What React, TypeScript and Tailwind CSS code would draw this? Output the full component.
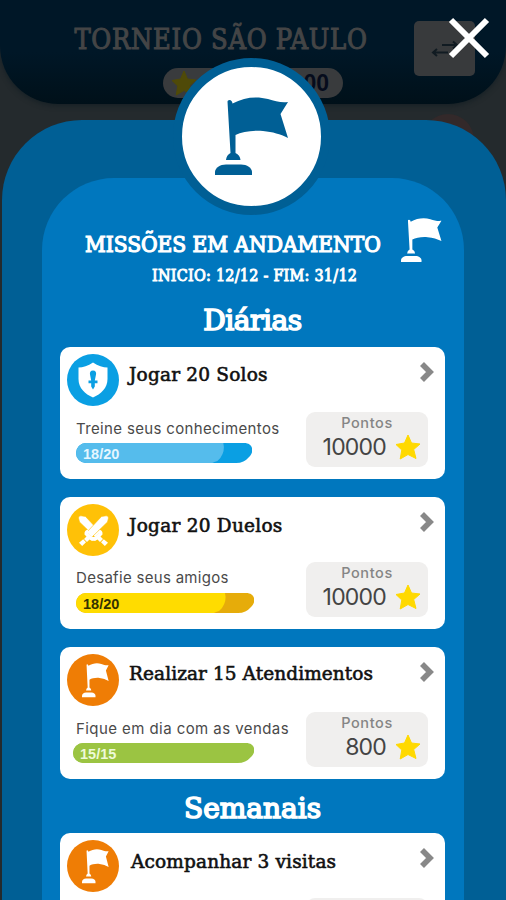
import { ChevronRight } from 'lucide-react'
import clsx from 'clsx'

type IconName = 'shield' | 'swords' | 'flag'

interface Mission {
  title: string
  titleClass: string
  icon: IconName
  circle: string
  details?: {
    description: string
    descriptionClass: string
    progress: string
    progressClass: string
    track: string
    fill: string
    points: string
  }
}

const slab = "font-['DejaVu_Serif',serif]"
const slabCondensed = "font-['DejaVu_Serif_Condensed','DejaVu_Serif',serif]"

const daily: Mission[] = [
  {
    title: 'Jogar 20 Solos',
    titleClass: 'ml-[10px] pt-[8px] tracking-[0.2px]',
    icon: 'shield',
    circle: 'bg-[#0a9fe3]',
    details: {
      description: 'Treine seus conhecimentos',
      descriptionClass: 'pt-[13px] tracking-[0.35px]',
      progress: '18/20',
      progressClass: 'ml-4 w-[176px] text-[#e4f6ff]',
      track: '#0a9fe3',
      fill: '#55bcec',
      points: '10000',
    },
  },
  {
    title: 'Jogar 20 Duelos',
    titleClass: 'ml-[10px] pt-[9px] tracking-[0.25px]',
    icon: 'swords',
    circle: 'bg-[#ffc107]',
    details: {
      description: 'Desafie seus amigos',
      descriptionClass: 'pt-[12px] tracking-[0.3px]',
      progress: '18/20',
      progressClass: 'ml-4 w-[178px] text-[#333300]',
      track: '#e6ac0a',
      fill: '#ffdc00',
      points: '10000',
    },
  },
  {
    title: 'Realizar 15 Atendimentos',
    titleClass: 'ml-[10px] pt-[7px] tracking-[0.08px]',
    icon: 'flag',
    circle: 'bg-[#ef7d05]',
    details: {
      description: 'Fique em dia com as vendas',
      descriptionClass: 'pt-[13px] tracking-[0.43px]',
      progress: '15/15',
      progressClass: 'ml-[13px] w-[181px] text-[#eefad8]',
      track: '#9bc442',
      fill: '#9bc442',
      points: '800',
    },
  },
]

const weekly: Mission[] = [
  {
    title: 'Acompanhar 3 visitas',
    titleClass: 'ml-[12px] pt-[9px] tracking-[0.15px]',
    icon: 'flag',
    circle: 'bg-[#ef7d05]',
  },
]

function Flag({ className }: { className?: string }) {
  return (
    <svg viewBox="0 0 74 80" className={className} fill="currentColor" preserveAspectRatio="none">
      <path d="M12.5 4.500Q12.500 3 14.500 3Q17 3 17.500 6.500C29 0 42 -1 53 2C60 4 66 6 73 5L65.500 17L73 41C65 37 58 35 48 34C37 33 27 35 20.500 38L20.500 56Q25 58 25.500 63L11 63Q11.500 58 15.500 56Z" />
      <path d="M0 78V75C0 71 5 67.500 11 67.500L26 67.500C32 67.500 37 71 37 75V78Z" />
    </svg>
  )
}

function Shield() {
  return (
    <svg viewBox="0 0 30 36" className="h-9 w-[30px]">
      <path d="M15 .5C20 4 25 5.300 29.500 5.500V17C29.500 26 23 32 15 35.500C7 32 .5 26 .5 17V5.500C5 5.300 10 4 15 .5Z" fill="white" />
      <path
        d="M15 8.500C17.500 8.500 18.500 10.500 18 12.500L16.800 18.500H19.500V21.200H16.800V24.500L15 27.500L13.200 24.500V21.200H10.500V18.500H13.200L12 12.500C11.500 10.500 12.500 8.500 15 8.500Z"
        fill="#0a9fe3"
      />
    </svg>
  )
}

function Swords() {
  // blade, guard and grip of one sword; the other is its mirror image
  const sword = (
    <>
      <path d="M.5 3Q.5 .5 3 .8L7.500 1.500L22 17L17 22L1.500 7Z" fill="white" stroke="#ffc107" strokeWidth=".6" />
      <path d="M12.500 20.500Q14 23 17 21.500L20.500 18Q21.500 16 20.500 14.500Q25 15 24.500 19.500L22.500 21.500L25 24L22 27L19.500 24.500L17 26Q13 25.500 12.500 20.500Z" fill="white" />
      <path d="M25.800 24.300L30 27.800L26.800 31L23 27.200Z" fill="white" />
    </>
  )
  return (
    <svg viewBox="0 0 31 31" className="h-[31px] w-[31px]">
      {sword}
      <g transform="translate(31 0) scale(-1 1)">{sword}</g>
    </svg>
  )
}

function Star({ className, color = '#ffd900' }: { className?: string; color?: string }) {
  return (
    <svg viewBox="0 0 26 26" className={className}>
      <path
        d="M13 1L16.500 9L25 10L18.700 15.500L21 24.500L13 20.500L5.200 25L6.800 16L1 10.500L9.500 9Z"
        fill={color}
        stroke={color}
        strokeWidth="1"
        strokeLinejoin="round"
      />
    </svg>
  )
}

function MissionIcon({ name }: { name: IconName }) {
  if (name === 'shield') return <Shield />
  if (name === 'swords') return <Swords />
  return <Flag className="ml-1 h-[35px] w-[27px]" />
}

function MissionCard({ mission }: { mission: Mission }) {
  const { details } = mission

  return (
    <article className="flex h-[132px] shrink-0 rounded-[10px] bg-white">
      <div className="flex min-w-0 flex-1 flex-col">
        <div className="flex h-[60px] pt-[7px] pl-[7px]">
          <div className={clsx('flex size-[52px] shrink-0 items-center justify-center rounded-full text-white', mission.circle)}>
            <MissionIcon name={mission.icon} />
          </div>
          <h3 className={clsx(slab, 'text-[18.5px] leading-[26px] whitespace-nowrap text-[#111] [-webkit-text-stroke:0.6px_#111]', mission.titleClass)}>
            {mission.title}
          </h3>
        </div>
        {details && (
          <>
            <p className={clsx("h-9 pl-4 font-['Inter',sans-serif] text-[15px] leading-[18px] whitespace-nowrap text-[#4a4a4a]", details.descriptionClass)}>
              {details.description}
            </p>
            <div className={clsx('relative h-5', details.progressClass)}>
              <svg viewBox="0 0 178 20" preserveAspectRatio="none" className="h-5 w-full">
                <path d="M10 0H170C180 0 180 10 175 14Q170 20 162 20H10A10 10 0 0 1 10 0Z" fill={details.track} />
                <path d="M10 0H149Q151 8 146 15Q144 18 140 19L138 20H10A10 10 0 0 1 10 0Z" fill={details.fill} />
              </svg>
              <span className="absolute top-px left-[7px] font-['Liberation_Sans',sans-serif] text-[14.5px] leading-5 font-bold">
                {details.progress}
              </span>
            </div>
          </>
        )}
      </div>
      <div className="flex w-[139px] shrink-0 flex-col">
        <div className="flex h-[65px] justify-end pt-[9px] pr-[3px]">
          <ChevronRight className="size-8" color="#888" strokeWidth={4.2} strokeLinecap="butt" strokeLinejoin="miter" />
        </div>
        <div className="h-[55px] w-[122px] rounded-[9px] bg-[#f0efee] pt-px">
          {details && (
            <>
              <p className="text-center font-['Inter',sans-serif] text-[14.5px] leading-[19px] font-medium tracking-[0.6px] text-[#858585]">Pontos</p>
              <div className="flex h-[29px] items-center justify-end gap-[9px] pr-[7px]">
                <span className="font-['Inter',sans-serif] text-[23px] leading-7 tracking-[-0.8px] text-[#444]">{details.points}</span>
                <Star className="size-[26px]" />
              </div>
            </>
          )}
        </div>
      </div>
    </article>
  )
}

export default function App() {
  return (
    <div className="relative flex h-[900px] w-[506px] flex-col overflow-hidden bg-[#242a2d]">
      {/* Dimmed tournament header */}
      <header className="flex h-[104px] shrink-0 rounded-b-[58px] bg-gradient-to-b from-[#001727] from-50% to-[#001019] pt-6 pl-[58px] shadow-[0_2px_5px_#172126]">
        <div className="flex w-[326px] flex-col items-center">
          <h1 className={clsx(slabCondensed, 'text-[27px] leading-8 tracking-[0.75px] whitespace-nowrap text-[#444546] [-webkit-text-stroke:1px_#444546]')}>TORNEIO SÃO PAULO</h1>
          <div className="mt-3 ml-[64px] flex h-[30px] w-[180px] items-center justify-between rounded-full bg-[#393b3d] pr-[14px] pl-2">
            <Star className="size-[26px]" color="#4f4a08" />
            <span className="font-['Liberation_Sans',sans-serif] text-[23px] font-bold text-[#060c1c]">00</span>
          </div>
        </div>
        <div className="-mt-[3px] ml-[30px] flex h-[55px] w-[61px] items-center justify-center rounded-[5px] bg-[#383a3c]">
          <svg viewBox="0 0 28 18" className="h-[18px] w-7" fill="none" stroke="#111b22" strokeWidth="2">
            <path d="M11 5H26M22 1.500L26 5L22 8.500M17 12.500H2M6 9L2 12.500L6 16" />
          </svg>
        </div>
      </header>

      <div className="absolute top-[114px] left-[422px] size-[52px] rounded-full bg-[#33292a]" />

      <main className="relative mt-4 ml-[2px] flex-1 rounded-t-[80px] bg-[#005f95] pt-[58px] pr-[42px] pl-10">
        <section className="flex h-[722px] flex-col overflow-hidden rounded-t-[72px] bg-[#0077be] px-[18px] pr-[19px]">
          <div className="flex h-[88px] shrink-0 pt-10 pl-[25px]">
            <h2 className={clsx(slabCondensed, 'w-[296px] pt-[11px] text-[22.5px] leading-[30px] tracking-[-0.02px] whitespace-nowrap text-white [-webkit-text-stroke:1.2px_#fff]')}>
              MISSÕES EM ANDAMENTO
            </h2>
            <Flag className="ml-5 h-[45px] w-[41px] text-white" />
          </div>
          <p className={clsx(slabCondensed, 'h-5 shrink-0 pl-[92px] text-[16px] leading-5 tracking-[0.25px] whitespace-nowrap text-white [-webkit-text-stroke:0.9px_#fff]')}>
            INICIO: 12/12 - FIM: 31/12
          </p>
          <h2 className={clsx(slab, 'h-[61px] shrink-0 pt-[17px] text-center text-[28px] leading-9 tracking-[-0.4px] text-white [-webkit-text-stroke:1.6px_#fff]')}>Diárias</h2>
          <div className="flex flex-col gap-[18px]">
            {daily.map((mission) => (
              <MissionCard key={mission.title} mission={mission} />
            ))}
          </div>
          <h2 className={clsx(slab, 'h-[54px] shrink-0 pt-3 text-center text-[28px] leading-9 text-white [-webkit-text-stroke:1.6px_#fff]')}>Semanais</h2>
          {weekly.map((mission) => (
            <MissionCard key={mission.title} mission={mission} />
          ))}
        </section>
      </main>

      {/* Flag medallion */}
      <div className="absolute top-[58px] left-[173px] flex size-[157px] items-center justify-center rounded-full border-[9px] border-[#005f95] bg-white">
        <Flag className="h-20 w-[74px] text-[#005f95]" />
      </div>

      <button aria-label="Fechar" className="absolute top-[17px] left-[448px]">
        <svg viewBox="0 0 42 42" className="size-[42px]" stroke="white" strokeWidth="6">
          <path d="M3 3L39 39M39 3L3 39" />
        </svg>
      </button>
    </div>
  )
}
